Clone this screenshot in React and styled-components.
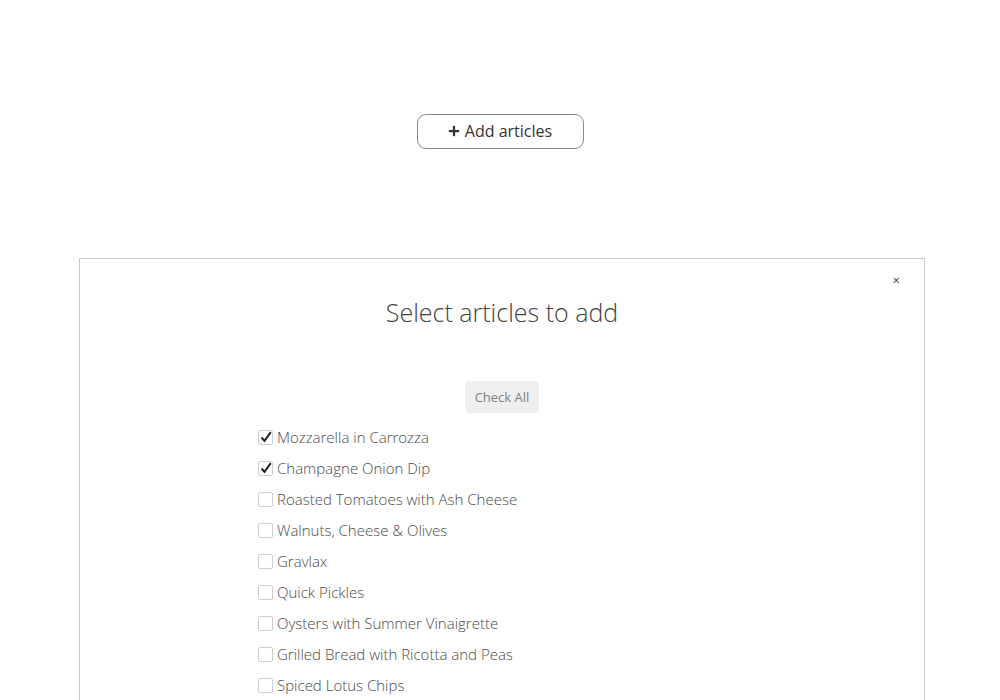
import React, { useState } from "react";
import styled, { createGlobalStyle } from "styled-components";
import { FaPlus } from "react-icons/fa";

const Global = createGlobalStyle`
  body {
    margin: 0;
    background: #fff;
    font-family: "Open Sans", "Liberation Sans", sans-serif;
    overflow: hidden;
  }
`;

const Page = styled.div`
  width: 1000px;
  height: 700px;
  display: flex;
  flex-direction: column;
  align-items: center;
`;

const AddButton = styled.button`
  flex-shrink: 0;
  margin-top: 114px;
  width: 167px;
  height: 35px;
  display: flex;
  align-items: center;
  justify-content: center;
  gap: 5px;
  background: #fff;
  border: 1px solid #8a8a8a;
  border-radius: 9px;
  font-family: "Open Sans", sans-serif;
  font-size: 16px;
  color: #333;
  padding: 0 0 1px;
  cursor: pointer;
  svg {
    width: 12px;
    height: 12px;
    color: #333;
  }
`;

const Modal = styled.div`
  flex-shrink: 0;
  margin-top: 109px;
  margin-left: 4px;
  width: 844px;
  height: 460px;
  border: 1px solid #c8c8c8;
  border-bottom: none;
  position: relative;
  display: flex;
  flex-direction: column;
  align-items: center;
`;

const Close = styled.span`
  position: absolute;
  top: 12px;
  right: 24px;
  font-size: 13px;
  color: #444;
  cursor: pointer;
`;

const Title = styled.h2`
  flex-shrink: 0;
  margin: 34px 0 0;
  font-weight: 300;
  font-size: 25px;
  line-height: 38px;
  color: #444;
`;

const CheckAll = styled.button`
  flex-shrink: 0;
  margin-top: 50px;
  height: 32px;
  padding: 0 10px;
  border: none;
  border-radius: 4px;
  background: #efefef;
  color: #808080;
  font-family: "Open Sans", sans-serif;
  font-size: 13px;
  cursor: pointer;
`;

const List = styled.div`
  flex-shrink: 0;
  margin-top: 8px;
  align-self: flex-start;
  margin-left: 178px;
  display: flex;
  flex-direction: column;
`;

const Row = styled.label`
  height: 31px;
  flex-shrink: 0;
  display: flex;
  align-items: center;
  gap: 4px;
  font-size: 15px;
  font-weight: 300;
  color: #4a4a4a;
  cursor: pointer;
`;

const Box = styled.span`
  width: 13px;
  height: 13px;
  border: 1px solid #cfcfcf;
  border-radius: 2px;
  display: flex;
  align-items: center;
  justify-content: center;
  margin-top: 1px;
  svg {
    display: ${(p) => (p.checked ? "block" : "none")};
  }
`;

const items = [
  "Mozzarella in Carrozza",
  "Champagne Onion Dip",
  "Roasted Tomatoes with Ash Cheese",
  "Walnuts, Cheese & Olives",
  "Gravlax",
  "Quick Pickles",
  "Oysters with Summer Vinaigrette",
  "Grilled Bread with Ricotta and Peas",
  "Spiced Lotus Chips",
];

const Check = () => (
  <svg width="12" height="12" viewBox="0 0 12 12">
    <path d="M1.5 6.5 L4.5 9.8 L10.8 1.2" fill="none" stroke="#222" strokeWidth="2" />
  </svg>
);

export default function App() {
  const [checked, setChecked] = useState([true, true]);
  const toggle = (i) => {
    const next = [...checked];
    next[i] = !next[i];
    setChecked(next);
  };
  return (
    <Page>
      <Global />
      <AddButton>
        <FaPlus />
        Add articles
      </AddButton>
      <Modal>
        <Close>×</Close>
        <Title>Select articles to add</Title>
        <CheckAll onClick={() => setChecked(items.map(() => true))}>Check All</CheckAll>
        <List>
          {items.map((name, i) => (
            <Row key={name} onClick={() => toggle(i)}>
              <Box checked={!!checked[i]}>
                <Check />
              </Box>
              {name}
            </Row>
          ))}
        </List>
      </Modal>
    </Page>
  );
}
